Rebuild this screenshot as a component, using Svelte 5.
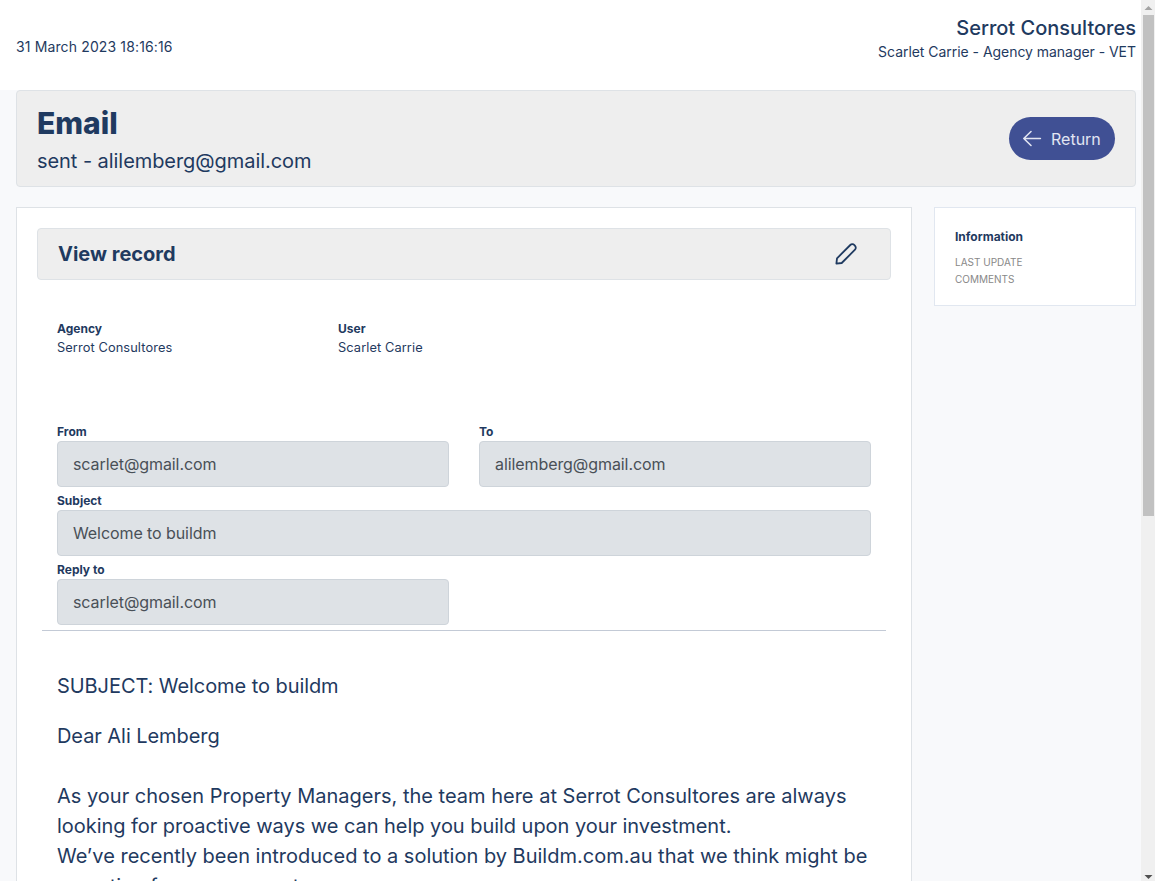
<script>
  const meta = [
    { label: 'Agency', value: 'Serrot Consultores' },
    { label: 'User', value: 'Scarlet Carrie' }
  ];
  const fields = [
    { label: 'From', value: 'scarlet@gmail.com' },
    { label: 'To', value: 'alilemberg@gmail.com' },
    { label: 'Subject', value: 'Welcome to buildm', wide: true },
    { label: 'Reply to', value: 'scarlet@gmail.com' }
  ];
</script>

<div class="window">
  <div class="page">
    <header class="topbar">
      <div class="date">31 March 2023 18:16:16</div>
      <div class="account">
        <div class="company">Serrot Consultores</div>
        <div class="role">Scarlet Carrie - Agency manager - VET</div>
      </div>
    </header>

    <section class="banner">
      <div>
        <h1>Email</h1>
        <div class="status">sent - alilemberg@gmail.com</div>
      </div>
      <button class="return">
        <svg width="20" height="20" viewBox="0 0 20 20" fill="none" stroke="currentColor" stroke-width="1.6" stroke-linecap="round" stroke-linejoin="round">
          <path d="M18.4 9.500H1.800M9 2.500L1.800 9.500L9 16.500" />
        </svg>
        <span>Return</span>
      </button>
    </section>

    <div class="columns">
      <main class="card">
        <div class="card-head">
          <h2>View record</h2>
          <svg width="22" height="22" viewBox="0 0 22 22" fill="none" stroke="currentColor" stroke-width="1.8" stroke-linejoin="round">
            <path d="M1.400 20.700L2 15.300L15.300 2Q16.100 1.200 17.200 1.200Q18.600 1.200 19.700 2.300Q20.800 3.400 20.800 4.800Q20.800 5.900 20 6.700L6.700 20L1.400 20.700Z" />
          </svg>
        </div>
        <div class="meta">
          {#each meta as m}
            <div>
              <div class="label">{m.label}</div>
              <div class="value">{m.value}</div>
            </div>
          {/each}
        </div>
        <div class="fields">
          {#each fields as f}
            <div class:wide={f.wide}>
              <div class="label">{f.label}</div>
              <div class="input">{f.value}</div>
            </div>
          {/each}
        </div>
        <div class="rule"></div>
        <article>
          <p class="subject">SUBJECT: Welcome to buildm</p>
          <p class="dear">Dear Ali Lemberg</p>
          <p>
            As your chosen Property Managers, the team here at Serrot Consultores are always<br />
            <span class="tight">looking for proactive ways we can help you build upon your investment.</span><br />
            We’ve recently been introduced to a solution by Buildm.com.au that we think might be<br />
            <span class="tight">an option for your property.</span>
          </p>
        </article>
      </main>

      <aside>
        <h3>Information</h3>
        <div>LAST UPDATE</div>
        <div>COMMENTS</div>
      </aside>
    </div>
  </div>

  <div class="scrollbar">
    <svg width="14" height="15" viewBox="0 0 14 15"><path d="M3.500 10L7.500 6L11.500 10Z" fill="#a3a3a3" /></svg>
    <div class="thumb"></div>
    <svg class="down" width="14" height="15" viewBox="0 0 14 15"><path d="M3.500 9L7.500 13L11.500 9Z" fill="#505050" /></svg>
  </div>
</div>

<style>
  :global(body) {
    margin: 0;
    overflow: hidden;
  }
  .window {
    display: flex;
    width: 1155px;
    height: 881px;
    overflow: hidden;
    background: #f8f9fb;
    color: #1f3a60;
    font-family: Inter, sans-serif;
  }
  .window * {
    box-sizing: border-box;
  }
  h1, h2, h3, p {
    margin: 0;
  }
  .page {
    width: 1141px;
    height: 881px;
    overflow: hidden;
  }
  .topbar {
    display: flex;
    justify-content: space-between;
    height: 90px;
    padding: 13px 5px 0 16px;
    background: #fff;
  }
  .date {
    padding-top: 23px;
    font-size: 14px;
    letter-spacing: 0.13px;
    line-height: 21px;
  }
  .account {
    text-align: right;
  }
  .company {
    font-size: 20px;
    font-weight: 500;
    line-height: 30px;
  }
  .role {
    margin-top: -2px;
    font-size: 14px;
    letter-spacing: -0.04px;
    line-height: 21px;
  }
  .banner {
    display: flex;
    justify-content: space-between;
    width: 1120px;
    height: 97px;
    margin-left: 16px;
    padding: 14px 20px 0;
    background: #eee;
    border: 1px solid #dee2e6;
    border-radius: 4px;
  }
  h1 {
    font-size: 30px;
    font-weight: 850;
    line-height: 36px;
  }
  .status {
    margin-top: 5px;
    font-size: 20px;
    letter-spacing: -0.06px;
    line-height: 30px;
  }
  .return {
    display: flex;
    align-items: center;
    gap: 9px;
    width: 106px;
    height: 43px;
    margin-top: 12px;
    padding: 0 0 0 13px;
    border: 0;
    border-radius: 22px;
    background: #405094;
    color: #e2e5f2;
    font: 400 16px/24px Inter, sans-serif;
  }
  .return span {
    padding-top: 1px;
  }
  .columns {
    display: flex;
    align-items: flex-start;
    gap: 22px;
    margin: 20px 0 0 16px;
  }
  .card {
    width: 896px;
    height: 760px;
    padding: 20px;
    background: #fff;
    border: 1px solid #dee2e6;
  }
  .card-head {
    display: flex;
    align-items: center;
    justify-content: space-between;
    height: 52px;
    padding: 0 33px 0 20px;
    background: #eee;
    border: 1px solid #dee2e6;
    border-radius: 4px;
  }
  h2 {
    font-size: 20px;
    font-weight: 700;
    line-height: 24px;
  }
  .meta {
    display: grid;
    grid-template-columns: 281px 281px;
    height: 103px;
    margin: 40px 20px 0;
  }
  .label {
    font-size: 12px;
    font-weight: 700;
    line-height: 18px;
  }
  .value {
    font-size: 12.800px;
    letter-spacing: 0.1px;
    line-height: 19px;
  }
  .fields {
    display: grid;
    grid-template-columns: 1fr 1fr;
    gap: 5px 30px;
    padding: 0 20px;
  }
  .wide {
    grid-column: 1 / 3;
  }
  .input {
    height: 46px;
    padding: 0 15px;
    background: #dee2e6;
    border: 1px solid #ced4da;
    border-radius: 4px;
    color: #495057;
    font-size: 16px;
    letter-spacing: -0.08px;
    line-height: 45px;
  }
  .rule {
    height: 1px;
    margin: 5px 5px 40px;
    background: #c3cad6;
  }
  article {
    padding: 0 0 0 20px;
    font-size: 20px;
    line-height: 30px;
    white-space: nowrap;
  }
  .subject {
    letter-spacing: -0.07px;
  }
  .dear {
    margin: 20px 0 30px;
    letter-spacing: -0.06px;
  }
  .tight {
    letter-spacing: -0.04px;
  }
  aside {
    width: 202px;
    height: 99px;
    padding: 20px;
    background: #fff;
    border: 1px solid #e1e7f0;
    color: #888;
    font-size: 10px;
    line-height: 17px;
  }
  h3 {
    margin-bottom: 8px;
    color: #1f3a60;
    font-size: 12px;
    font-weight: 700;
    line-height: 18px;
  }
  .scrollbar {
    display: flex;
    flex-direction: column;
    width: 14px;
    height: 881px;
    background: #f0f0f0;
  }
  .scrollbar svg {
    display: block;
    flex: none;
  }
  .thumb {
    width: 11px;
    height: 501px;
    margin-left: 2px;
    background: #c1c1c1;
  }
  .scrollbar .down {
    margin-top: auto;
  }
</style>
